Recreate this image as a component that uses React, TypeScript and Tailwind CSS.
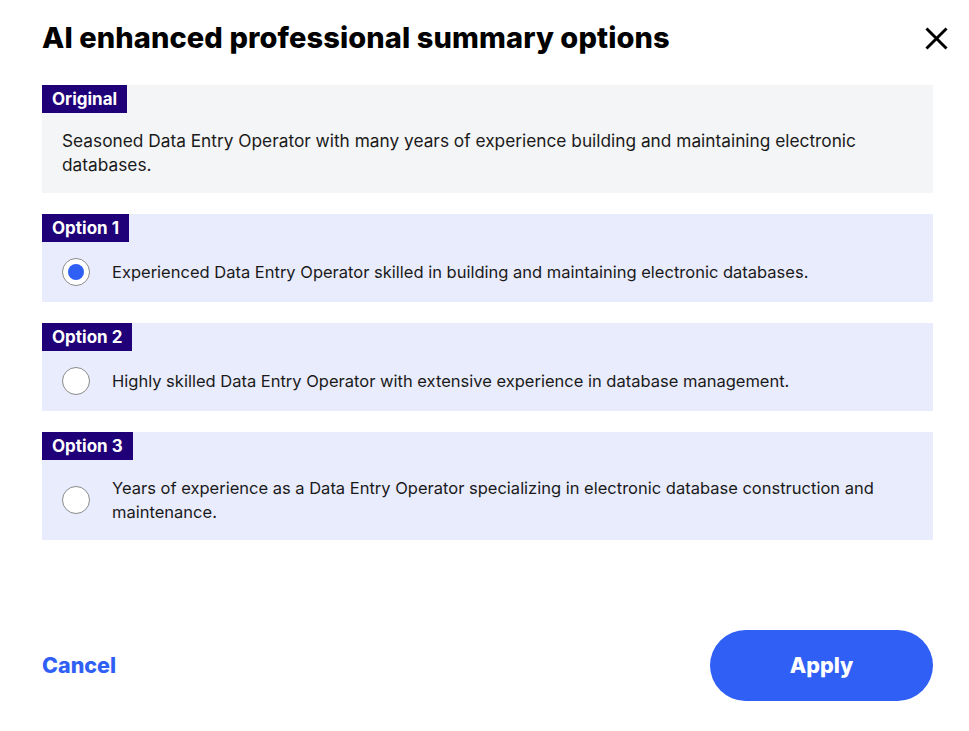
import React, { useState } from 'react';

const options = [
  "Experienced Data Entry Operator skilled in building and maintaining electronic databases.",
  "Highly skilled Data Entry Operator with extensive experience in database management.",
  "Years of experience as a Data Entry Operator specializing in electronic database construction and maintenance.",
];

const Tag = ({ children }: { children: React.ReactNode }) => (
  <div className="inline-flex h-[28px] items-center bg-[#1f0078] px-[10px] pt-[2px] text-[17px] font-bold text-white">
    {children}
  </div>
);

const App = () => {
  const [selected, setSelected] = useState(0);

  return (
    <div className="flex h-screen w-full flex-col bg-white font-['Inter',sans-serif] text-[#1a1a1a]">
      <div className="flex items-center justify-between pl-[42px] pr-[19px] pt-[20px]">
        <h1 className="text-[29px] font-extrabold leading-[36px] tracking-[0.1px] text-black">
          AI enhanced professional summary options
        </h1>
        <button className="flex h-[28px] w-[28px] items-center justify-center text-black">
          <svg width="27" height="27" viewBox="0 0 24 24" fill="none" stroke="currentColor" strokeWidth="2.6" strokeLinecap="square">
            <path d="M4 4L20 20M20 4L4 20" />
          </svg>
        </button>
      </div>

      <div className="flex flex-col gap-[21px] pl-[42px] pr-[36px] pt-[29px]">
        <section className="bg-[#f4f5f7]">
          <Tag>Original</Tag>
          <p className="px-[20px] pb-[16px] pt-[16px] text-[17.3px] leading-[24px]">
            Seasoned Data Entry Operator with many years of experience building and maintaining electronic databases.
          </p>
        </section>

        {options.map((text, i) => (
          <section key={i} className="bg-[#e9ecfd]">
            <Tag>Option {i + 1}</Tag>
            <label
              className="flex cursor-pointer items-center gap-[22px] px-[20px] pb-[16px] pt-[16px]"
              onClick={() => setSelected(i)}
            >
              <span className="flex h-[28px] w-[28px] shrink-0 items-center justify-center rounded-full border border-[#8a8a8a] bg-white">
                {selected === i && <span className="h-[16px] w-[16px] rounded-full bg-[#2f5ff5]" />}
              </span>
              <span className="text-[16.5px] leading-[24px]">{text}</span>
            </label>
          </section>
        ))}
      </div>

      <div className="mt-auto flex items-center justify-between pb-[30px] pl-[42px] pr-[36px]">
        <button className="text-[21.5px] font-extrabold text-[#2f5ff5]">Cancel</button>
        <button className="h-[71px] w-[223px] rounded-full bg-[#2f5ff5] text-[21.5px] font-extrabold text-white">
          Apply
        </button>
      </div>
    </div>
  );
};

export default App;
